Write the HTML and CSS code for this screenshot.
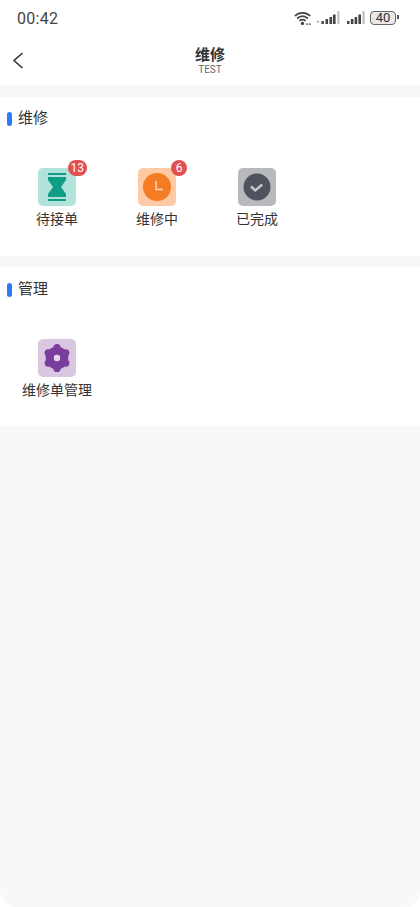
FILE: index.html
```html
<!DOCTYPE html>
<html lang="zh-CN">

<head>
    <meta charset="UTF-8" />
    <meta name="viewport" content="width=device-width, initial-scale=1.0" />
    <title>维修</title>
    <link rel="stylesheet" href="styles.css">
</head>

<body>
    <div class="page">
        <div class="status-bar">
            <span class="time">00:42</span>
            <div class="status-icons">
                <svg class="wifi" width="18" height="15" viewBox="0 0 18 15">
                    <path d="M.8 5C5.200.7 11.800.7 16.200 5M3.100 7.500c3.300-3 7.500-3 10.800 0M5.400 9.900c2-1.600 4.200-1.600 6.200 0" fill="none" stroke="#444" stroke-width="1.700" />
                    <circle cx="8.500" cy="12.400" r="1.700" fill="#444" />
                    <rect x="12.300" y="12.300" width="1.600" height="1.700" fill="#666" />
                    <rect x="15" y="12.300" width="1.600" height="1.700" fill="#666" />
                </svg>
                <svg class="signal-one" width="23" height="14" viewBox="0 0 23 14">
                    <circle cx="1" cy="10.800" r="1" fill="#999" />
                    <rect x="4.500" y="10" width="2.400" height="3" fill="#444" />
                    <rect x="8.500" y="8" width="2.600" height="5" fill="#444" />
                    <rect x="12.500" y="6" width="2.600" height="7" fill="#444" />
                    <rect x="16" y="3.500" width="2.600" height="9.500" fill="#444" />
                    <rect x="20.200" y="0" width="2.400" height="13" fill="#c4c4c4" />
                </svg>
                <svg class="signal-two" width="18" height="14" viewBox="0 0 18 14">
                    <rect x="0" y="10" width="2.400" height="3" fill="#444" />
                    <rect x="3.800" y="8" width="2.600" height="5" fill="#444" />
                    <rect x="7.600" y="6" width="2.600" height="7" fill="#444" />
                    <rect x="11.400" y="3.500" width="2.600" height="9.500" fill="#444" />
                    <rect x="15.400" y="0" width="2.400" height="13" fill="#c4c4c4" />
                </svg>
                <div class="battery"><span>40</span></div>
            </div>
        </div>

        <div class="nav-bar">
            <svg class="back" width="12" height="19" viewBox="0 0 12 19">
                <path d="M10.500 2 2 9.500l8.500 7.500" fill="none" stroke="#333" stroke-width="1.600" />
            </svg>
            <div class="nav-title">
                <div class="title">维修</div>
                <div class="subtitle">TEST</div>
            </div>
        </div>

        <section class="panel panel-repair">
            <h3 class="panel-head">维修</h3>
            <div class="grid">
                <div class="item">
                    <div class="icon icon-teal">
                        <svg width="18" height="28" viewBox="0 0 18 28">
                            <rect x="0" y="0" width="18" height="2" fill="#0f9d85" />
                            <rect x="0" y="26" width="18" height="2" fill="#0f9d85" />
                            <path d="M0 4h18v3l-5 7 5 7v3H0v-3l5-7-5-7z" fill="#0f9d85" />
                        </svg>
                        <span class="badge">13</span>
                    </div>
                    <div class="label">待接单</div>
                </div>
                <div class="item">
                    <div class="icon icon-orange">
                        <svg width="28" height="28" viewBox="0 0 28 28">
                            <circle cx="14" cy="14" r="14" fill="#f57c22" />
                            <path d="M13 8v8.500h7" fill="none" stroke="#fdd9bf" stroke-width="1.500" />
                        </svg>
                        <span class="badge">6</span>
                    </div>
                    <div class="label">维修中</div>
                </div>
                <div class="item">
                    <div class="icon icon-gray">
                        <svg width="28" height="28" viewBox="0 0 28 28">
                            <circle cx="14" cy="14" r="13.500" fill="#4f535e" />
                            <path d="M8 13.500l4.300 4 7-6" fill="none" stroke="#c8c9cd" stroke-width="2.400" />
                        </svg>
                    </div>
                    <div class="label">已完成</div>
                </div>
            </div>
        </section>

        <section class="panel panel-manage">
            <h3 class="panel-head">管理</h3>
            <div class="grid">
                <div class="item">
                    <div class="icon icon-purple">
                        <svg width="28" height="28" viewBox="0 0 28 28">
                            <g fill="#7b3d9b">
                                <circle cx="14" cy="14" r="11.300" />
                                <circle cx="14" cy="3.600" r="3.600" />
                                <circle cx="22.800" cy="8.900" r="3.600" />
                                <circle cx="22.800" cy="19.100" r="3.600" />
                                <circle cx="14" cy="24.400" r="3.600" />
                                <circle cx="5.200" cy="19.100" r="3.600" />
                                <circle cx="5.200" cy="8.900" r="3.600" />
                            </g>
                            <circle cx="14" cy="14" r="3.200" fill="#e6dbeb" />
                        </svg>
                    </div>
                    <div class="label">维修单管理</div>
                </div>
            </div>
        </section>
    </div>
</body>

</html>
```

FILE: styles.css
```css
html,
body {
    margin: 0;
    padding: 0;
    background: #fff;
}

body {
    font-family: "Noto Sans CJK SC", "Noto Sans", sans-serif;
    color: #333;
}

.page {
    width: 420px;
    height: 907px;
    background: #f8f8f8;
    border-radius: 0 0 16px 16px;
    overflow: hidden;
}

.status-bar {
    height: 36px;
    background: #fff;
    display: flex;
    align-items: center;
    justify-content: space-between;
    padding: 0 24px 0 17px;
    box-sizing: border-box;
}

.time {
    font-family: Roboto, sans-serif;
    font-size: 16px;
    color: #444;
    letter-spacing: 0.3px;
}

.status-icons {
    display: flex;
    align-items: center;
}

.signal-one {
    margin-left: 5px;
}

.signal-two {
    margin-left: 7px;
}

.battery {
    width: 26px;
    height: 14px;
    margin-left: 5px;
    box-sizing: border-box;
    border: 1px solid #666;
    border-radius: 4px;
    background: #e8e8e8;
    display: flex;
    align-items: center;
    justify-content: center;
    position: relative;
}

.battery span {
    font-family: Roboto, sans-serif;
    font-size: 13px;
    line-height: 12px;
    color: #333;
}

.battery::after {
    content: "";
    position: absolute;
    right: -4px;
    top: 3px;
    width: 2px;
    height: 4px;
    background: #555;
}

.nav-bar {
    height: 49px;
    background: #fff;
    position: relative;
    display: flex;
    justify-content: center;
    align-items: center;
}

.back {
    position: absolute;
    left: 12px;
    top: 15px;
}

.nav-title {
    text-align: center;
}

.title {
    font-size: 15px;
    line-height: 18px;
    font-weight: 700;
    color: #333;
}

.subtitle {
    margin-top: 1px;
    font-family: Roboto, sans-serif;
    font-size: 10px;
    line-height: 12px;
    color: #666;
}

.panel {
    background: #fff;
    margin-top: 12px;
    height: 159px;
}

.panel-manage {
    margin-top: 11px;
}

.panel-head {
    margin: 0;
    padding-left: 18px;
    height: 40px;
    line-height: 40px;
    font-size: 15px;
    font-weight: 400;
    color: #333;
    position: relative;
}

.panel-manage .panel-head {
    height: 42px;
    line-height: 42px;
}

.panel-head::before {
    content: "";
    position: absolute;
    left: 7px;
    top: 15px;
    width: 5px;
    height: 14px;
    border-radius: 3px;
    background: #2b7bf6;
}

.panel-manage .panel-head::before {
    top: 16px;
}

.grid {
    display: flex;
    padding-top: 31px;
}

.panel-manage .grid {
    padding-top: 30px;
}

.item {
    width: 100px;
    margin-left: 7px;
    margin-right: -7px;
    display: flex;
    flex-direction: column;
    align-items: center;
}

.icon {
    width: 38px;
    height: 38px;
    border-radius: 5px;
    display: flex;
    align-items: center;
    justify-content: center;
    position: relative;
}

.icon-teal {
    background: #b2e3db;
}

.icon-orange {
    background: #fdcaa5;
}

.icon-gray {
    background: #b8b9bd;
}

.icon-purple {
    background: #d9c6e1;
}

.badge {
    position: absolute;
    top: -8px;
    right: -11px;
    min-width: 16px;
    height: 16px;
    padding: 0 3px;
    box-sizing: border-box;
    border-radius: 8px;
    background: #e0504f;
    color: #fff;
    font-family: Roboto, sans-serif;
    font-size: 12px;
    line-height: 16px;
    text-align: center;
}

.label {
    margin-top: 2px;
    font-size: 14px;
    line-height: 20px;
    color: #333;
    white-space: nowrap;
}
```
